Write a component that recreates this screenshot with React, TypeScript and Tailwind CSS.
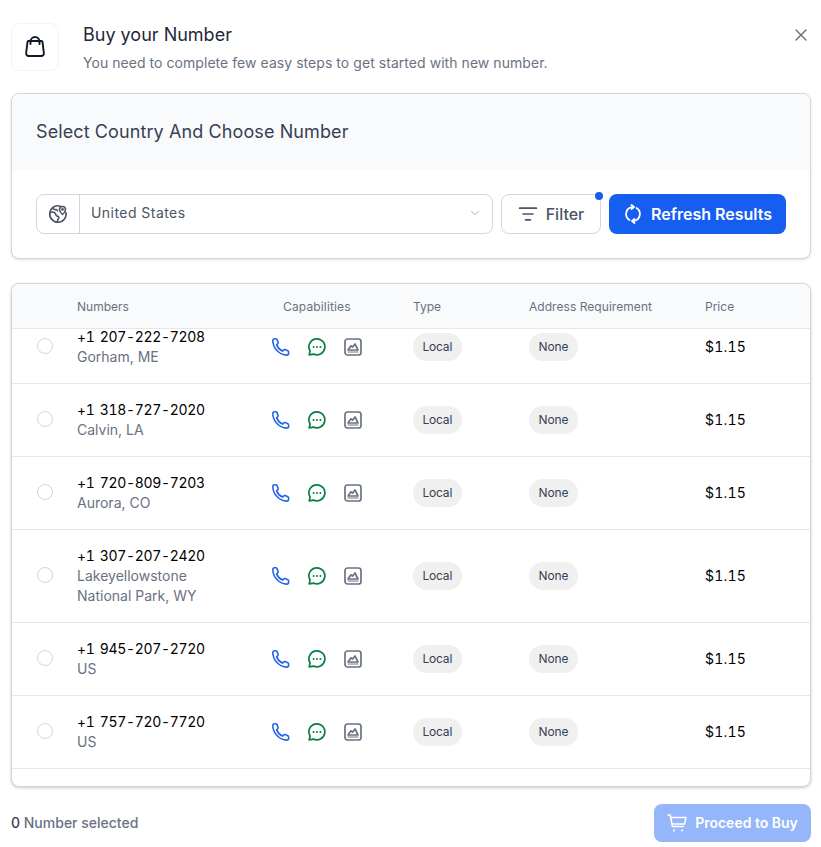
import React from 'react';
import { X, ChevronDown, ListFilter } from 'lucide-react';

const rows = [
  { number: '+1 207-222-7208', place: 'Gorham, ME' },
  { number: '+1 318-727-2020', place: 'Calvin, LA' },
  { number: '+1 720-809-7203', place: 'Aurora, CO' },
  { number: '+1 307-207-2420', place: 'Lakeyellowstone National Park, WY' },
  { number: '+1 945-207-2720', place: 'US' },
  { number: '+1 757-720-7720', place: 'US' },
];

const gridCols = 'grid grid-cols-[65px_194px_142px_116px_176px_1fr]';

const BagIcon = () => (
  <svg width="24" height="24" viewBox="0 0 24 24" fill="none" stroke="#111827" strokeWidth="1.900" strokeLinecap="round" strokeLinejoin="round">
    <path d="M5.500 6h13a1 1 0 0 1 1 .9l1.400 11.600a2.500 2.500 0 0 1-2.500 2.500H5.600a2.500 2.500 0 0 1-2.500-2.500L4.500 6.900a1 1 0 0 1 1-.9z" />
    <path d="M7.500 9V6.500a4.500 4.500 0 0 1 9 0V9" />
  </svg>
);

const GlobeIcon = () => (
  <svg width="20" height="20" viewBox="0 0 20 20" fill="none" stroke="#4b5563" strokeWidth="1.600" strokeLinecap="round" strokeLinejoin="round">
    <path d="M12.500 2.200A8.200 8.200 0 1 0 18 8.500" />
    <path d="M2.400 8.500c2-.8 3.500-.5 4.600.6 1 1 .6 2 1.600 2.700 1 .6 1.900.4 2.200 1.400.3 1-.6 1.700-1 2.600-.3.700-.3 1.400-.1 2" />
    <path d="M5 4.500c.8 1 1.800 1.300 2.700 1.100 1-.2 1.500.4 1.800 1.200" />
    <path d="M14.500 10.500s-3-2.600-3-5a3 3 0 0 1 6 0c0 2.400-3 5-3 5z" />
    <circle cx="14.500" cy="5.500" r=".6" />
  </svg>
);

const RefreshIcon = () => (
  <svg width="20" height="20" viewBox="0 0 20 20" fill="none" stroke="white" strokeWidth="1.800" strokeLinecap="round" strokeLinejoin="round">
    <path d="M9 3.100A7 7 0 0 0 6.500 16" />
    <path d="M11 16.900A7 7 0 0 0 13.500 4" />
    <path d="M8.500 1l2.500 2-2.500 2" />
    <path d="M11.500 15l-2.500 2 2.500 2" />
  </svg>
);

const PhoneIcon = () => (
  <svg width="20" height="20" viewBox="0 0 20 20" fill="none" stroke="#2563eb" strokeWidth="1.600" strokeLinecap="round" strokeLinejoin="round">
    <path d="M1.800 3.400c0-.9.700-1.600 1.600-1.600h1.400c.5 0 1 .3 1.200.8l1.100 2.700c.2.500.1 1-.3 1.400L5.600 7.900c1 2.600 3.200 4.900 6 6.200l1.200-1.200c.4-.4.900-.5 1.400-.3l2.600 1.100c.5.200.8.700.8 1.200v1.400c0 1-.8 1.800-1.900 1.800C8.300 18 1.800 10.800 1.800 3.400z" />
  </svg>
);

const ChatIcon = () => (
  <svg width="20" height="20" viewBox="0 0 20 20" fill="none" stroke="#0a7f45" strokeWidth="1.700" strokeLinecap="round" strokeLinejoin="round">
    <path d="M10 1.800a8 8 0 1 1-3.400 15.300l-4.400.8.900-3.900A8 8 0 0 1 10 1.800z" />
    <path d="M6.600 10h.01M10 10h.01M13.400 10h.01" strokeWidth="2" />
  </svg>
);

const ImageIcon = () => (
  <svg width="20" height="20" viewBox="0 0 20 20" fill="none" stroke="#6b7280" strokeWidth="1.700" strokeLinecap="round" strokeLinejoin="round">
    <rect x="2" y="2" width="16" height="16" rx="2.500" />
    <path d="M5 13 8 8.800l1.500 1.300L12 7l3 6z" />
    <path d="M5 15h10" strokeWidth="1" />
  </svg>
);

const CartIcon = () => (
  <svg width="20" height="20" viewBox="0 0 20 20" fill="none" stroke="white" strokeWidth="1.500" strokeLinecap="round" strokeLinejoin="round">
    <path d="M1 2h2.200l2.300 11.500h11" />
    <path d="M3.700 4.500h15.300l-1.500 6.500H5" />
    <path d="M7 17.500h.01M15 17.500h.01" strokeWidth="2.200" />
  </svg>
);

const Row = ({ number, place }: { number: string; place: string }) => (
  <div className={`${gridCols} items-center border-b border-gray-200 py-[16px]`}>
    <div className="-translate-y-px pl-[24.500px]">
      <div className="h-4 w-4 rounded-full border border-gray-300 bg-white" />
    </div>
    <div className="max-w-[150px]">
      <div className="text-sm leading-5 tracking-[-0.35px] text-black tabular-nums [word-spacing:2px]">{number}</div>
      <div className="text-sm leading-5 text-gray-500">{place}</div>
    </div>
    <div className="flex items-center gap-[16px]">
      <PhoneIcon />
      <ChatIcon />
      <ImageIcon />
    </div>
    <div>
      <span className="inline-flex h-7 items-center rounded-full bg-[#f0f0f0] px-[9.500px] text-xs tracking-[-0.2px] text-gray-700">Local</span>
    </div>
    <div>
      <span className="inline-flex h-7 items-center rounded-full bg-[#f0f0f0] px-[9.500px] text-xs tracking-[-0.1px] text-gray-700">None</span>
    </div>
    <div className="text-sm tracking-[0.2px] text-black tabular-nums">$1.15</div>
  </div>
);

export default function App() {
  return (
    <div className="h-[847px] w-[821px] overflow-hidden bg-white font-['Inter',sans-serif]">
      <div className="flex items-start pl-[11px] pr-[10px] pt-[23px]">
        <div className="flex h-12 w-12 items-center justify-center rounded-lg border border-gray-100 bg-white">
          <BagIcon />
        </div>
        <div className="ml-6 flex-1">
          <div className="text-lg leading-6 text-gray-800">Buy your Number</div>
          <div className="mt-[6px] text-sm leading-5 tracking-[0.05px] text-gray-500">You need to complete few easy steps to get started with new number.</div>
        </div>
        <X size={20} strokeWidth={1.700} className="mt-[2px] text-gray-500" />
      </div>

      <div className="ml-[11px] mr-[10px] mt-[20px] h-[166px] overflow-hidden rounded-lg border border-gray-300 bg-white shadow-sm">
        <div className="flex h-[76px] items-center bg-gray-50 px-6">
          <h2 className="text-lg tracking-[0.1px] text-gray-700">Select Country And Choose Number</h2>
        </div>
        <div className="flex items-start gap-2 px-6 pt-6">
          <div className="flex h-10 w-[457px] rounded-lg border border-gray-300">
            <div className="flex w-[43px] items-center justify-center border-r border-gray-300">
              <GlobeIcon />
            </div>
            <div className="flex flex-1 items-center justify-between pb-[2px] pl-[11px] pr-[10px] text-sm tracking-[0.45px] text-gray-600">
              United States
              <ChevronDown size={14} strokeWidth={1.500} className="text-gray-400" />
            </div>
          </div>
          <div className="relative flex h-10 w-[100px] items-center justify-center gap-2 rounded-lg border border-gray-300 bg-white text-base font-medium text-gray-600">
            <ListFilter size={20} />
            Filter
            <span className="absolute -right-[3px] -top-[3px] h-2 w-2 rounded-full bg-[#155eef]" />
          </div>
          <div className="flex h-10 w-[177px] items-center justify-center gap-2 rounded-lg bg-[#155eef] text-base font-semibold text-white">
            <RefreshIcon />
            Refresh Results
          </div>
        </div>
      </div>

      <div className="ml-[11px] mr-[10px] mt-[24px] h-[504px] overflow-hidden rounded-lg border border-gray-300 bg-white shadow-[0_1px_3px_rgba(0,0,0,0.2)]">
        <div className={`${gridCols} relative z-10 h-[45px] items-center border-b border-gray-200 bg-gray-50 pt-[2px] text-xs text-gray-500`}>
          <div />
          <div>Numbers</div>
          <div className="pl-[12px] tracking-[0.15px]">Capabilities</div>
          <div>Type</div>
          <div className="tracking-[0.05px]">Address Requirement</div>
          <div>Price</div>
        </div>
        <div className="-mt-[18px]">
          {rows.map((r) => (
            <Row key={r.number} number={r.number} place={r.place} />
          ))}
        </div>
      </div>

      <div className="flex items-center justify-between pl-[11px] pr-[10px] pt-[17px]">
        <div className="text-sm font-medium text-gray-500">
          <span className="text-gray-700">0</span> Number selected
        </div>
        <div className="flex h-[38px] w-[157px] items-center justify-center gap-2 rounded-lg bg-[#155eef]/45 text-sm font-semibold text-white">
          <CartIcon />
          Proceed to Buy
        </div>
      </div>
    </div>
  );
}
